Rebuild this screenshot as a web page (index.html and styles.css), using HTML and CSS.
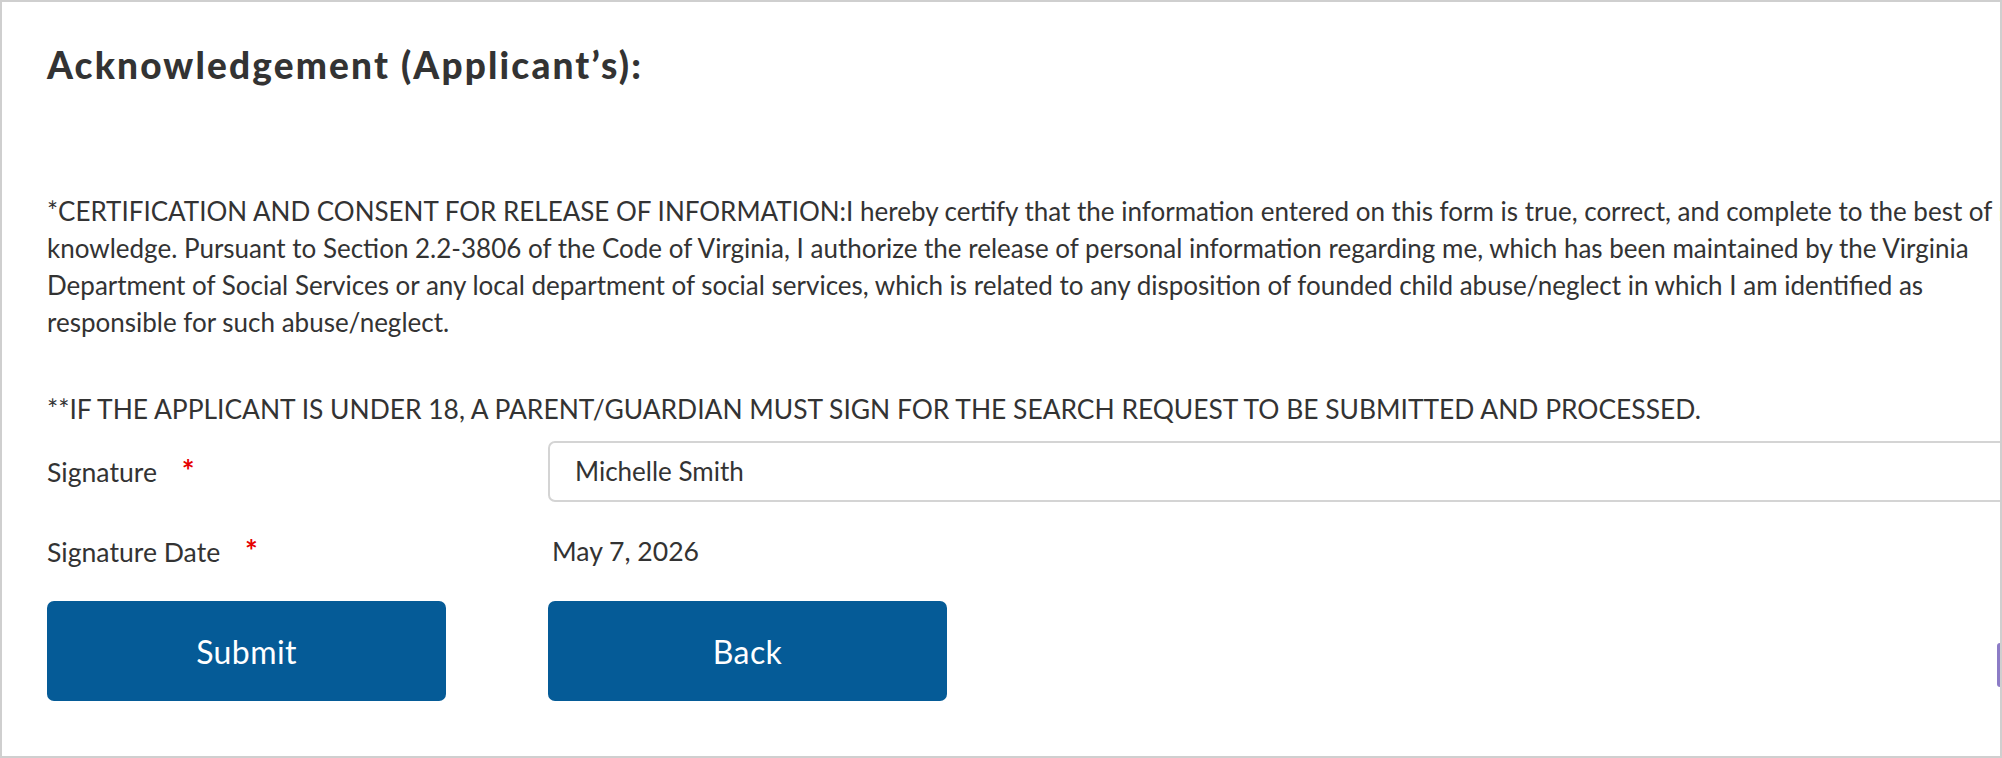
FILE: index.html
```html
<!DOCTYPE html>
<html lang="en">
<head>
<meta charset="utf-8">
<title>Acknowledgement</title>
<link rel="stylesheet" href="styles.css">
</head>
<body>
<div class="frame">
  <h1 class="title">Acknowledgement (Applicant’s):</h1>
  <p class="consent">*CERTIFICATION AND CONSENT FOR RELEASE OF INFORMATION:I hereby certify that the information entered on this form is true, correct, and complete to the best of my<br>knowledge. Pursuant to Section 2.2-3806 of the Code of Virginia, I authorize the release of personal information regarding me, which has been maintained by the Virginia<br>Department of Social Services or any local department of social services, which is related to any disposition of founded child abuse/neglect in which I am identified as<br>responsible for such abuse/neglect.</p>
  <p class="notice">**IF THE APPLICANT IS UNDER 18, A PARENT/GUARDIAN MUST SIGN FOR THE SEARCH REQUEST TO BE SUBMITTED AND PROCESSED.</p>
  <div class="row row-input">
    <label class="label" for="sig">Signature <span class="req">*</span></label>
    <input class="field" id="sig" type="text" value="Michelle Smith">
  </div>
  <div class="row row-date">
    <span class="label">Signature Date <span class="req">*</span></span>
    <span class="date">May 7, 2026</span>
  </div>
  <div class="actions">
    <button class="btn" type="button">Submit</button>
    <button class="btn" type="button">Back</button>
  </div>
  <div class="tab"></div>
</div>
</body>
</html>
```

FILE: styles.css
```css
html, body {
  margin: 0;
  padding: 0;
  background: #fff;
}
body {
  font-family: "Lato", "Noto Sans", sans-serif;
  color: #333;
}
.frame {
  position: relative;
  box-sizing: border-box;
  width: 2002px;
  height: 758px;
  border: 2px solid #cfcfcf;
  padding: 41px 0 0 45px;
  overflow: hidden;
}
.title {
  margin: 0;
  font-size: 37px;
  line-height: 44px;
  font-weight: 900;
  letter-spacing: 2.15px;
  color: #333;
}
.consent {
  margin: 105.5px 0 0 0;
  font-size: 26px;
  line-height: 37px;
  white-space: nowrap;
}
.notice {
  margin: 50px 0 0 0;
  font-size: 26.4px;
  line-height: 37px;
  white-space: nowrap;
}
.row {
  display: grid;
  grid-template-columns: 501px 1fr;
  align-items: center;
  font-size: 26.6px;
  line-height: 37px;
}
.row-input {
  margin-top: 13px;
}
.row-date {
  margin-top: 30px;
}
.req {
  color: #e60000;
  font-size: 30px;
  font-weight: 700;
  margin-left: 18px;
}
.field {
  box-sizing: border-box;
  width: 1500px;
  height: 61px;
  border: 2px solid #d4d4d4;
  border-radius: 7px;
  padding: 0 0 0 25px;
  font-family: inherit;
  font-size: 26px;
  color: #333;
  background: #fff;
  outline: none;
}
.date {
  padding-left: 4px;
}
.actions {
  display: flex;
  gap: 102px;
  margin-top: 30.5px;
}
.btn {
  width: 399px;
  height: 100px;
  border: none;
  border-radius: 7px;
  background: #055b97;
  color: #fff;
  font-family: inherit;
  font-size: 32px;
  letter-spacing: 0.4px;
}
.tab {
  position: absolute;
  right: 0;
  top: 641px;
  width: 3px;
  height: 44px;
  background: #8c7cc6;
  border-radius: 3px 0 0 3px;
}
```
